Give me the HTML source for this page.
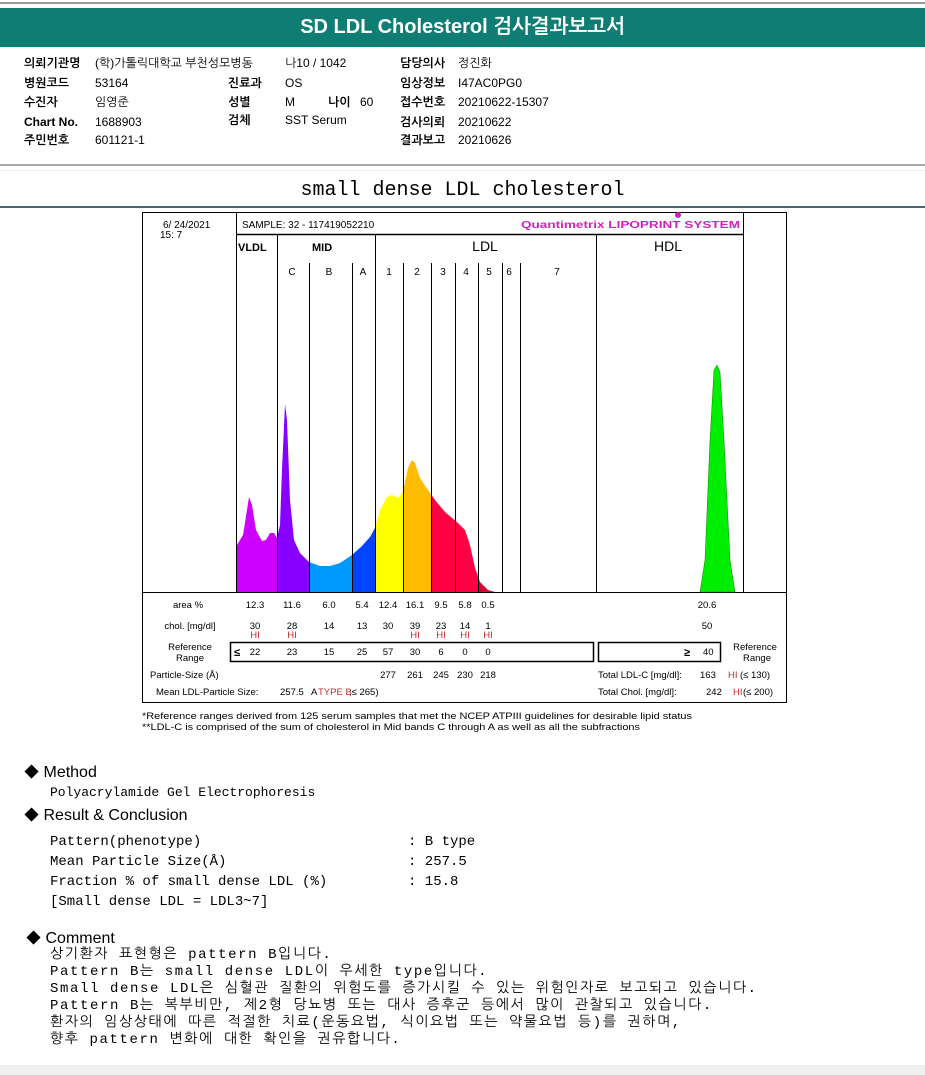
<!DOCTYPE html>
<html><head><meta charset="utf-8"><style>
body{margin:0;width:925px;height:1075px;position:relative;background:#fff;overflow:hidden;font-family:"Liberation Sans","NanumGothic",sans-serif;color:#000}
.a{position:absolute;white-space:nowrap}
.inf{font-size:12px}
.b{font-weight:bold}
.m{font-family:"Liberation Mono","NanumGothic",monospace;font-size:13px}
.h{font-family:"Liberation Sans","NanumGothic",sans-serif;font-size:16px}
.c{font-family:"Liberation Mono","NanumGothic",monospace;font-size:14px;letter-spacing:1.6px;line-height:17px}
</style></head><body>
<div class="a" style="left:0;top:2px;width:925px;height:2px;background:#999"></div>
<div class="a" style="left:0;top:8px;width:925px;height:39px;background:#0f7d73;color:#fff;font-size:20px;font-weight:bold;text-align:center;line-height:39px">SD LDL Cholesterol 검사결과보고서</div>

<div class="a inf b" style="left:24px;top:56px">의뢰기관명</div><div class="a inf" style="left:95px;top:56px">(학)가톨릭대학교 부천성모병동</div>
<div class="a inf" style="left:285px;top:56px">나10 / 1042</div>
<div class="a inf b" style="left:400px;top:56px">담당의사</div><div class="a inf" style="left:458px;top:56px">정진화</div>

<div class="a inf b" style="left:24px;top:76px">병원코드</div><div class="a inf" style="left:95px;top:76px">53164</div>
<div class="a inf b" style="left:228px;top:76px">진료과</div><div class="a inf" style="left:285px;top:76px">OS</div>
<div class="a inf b" style="left:400px;top:76px">임상정보</div><div class="a inf" style="left:458px;top:76px">I47AC0PG0</div>

<div class="a inf b" style="left:24px;top:95px">수진자</div><div class="a inf" style="left:95px;top:95px">임영준</div>
<div class="a inf b" style="left:228px;top:95px">성별</div><div class="a inf" style="left:285px;top:95px">M</div>
<div class="a inf b" style="left:328px;top:95px">나이</div><div class="a inf" style="left:360px;top:95px">60</div>
<div class="a inf b" style="left:400px;top:95px">접수번호</div><div class="a inf" style="left:458px;top:95px">20210622-15307</div>

<div class="a inf b" style="left:24px;top:115px">Chart No.</div><div class="a inf" style="left:95px;top:115px">1688903</div>
<div class="a inf b" style="left:228px;top:113px">검체</div><div class="a inf" style="left:285px;top:113px">SST Serum</div>
<div class="a inf b" style="left:400px;top:115px">검사의뢰</div><div class="a inf" style="left:458px;top:115px">20210622</div>

<div class="a inf b" style="left:24px;top:133px">주민번호</div><div class="a inf" style="left:95px;top:133px">601121-1</div>
<div class="a inf b" style="left:400px;top:133px">결과보고</div><div class="a inf" style="left:458px;top:133px">20210626</div>

<div class="a" style="left:0;top:164px;width:925px;height:2px;background:#aaa"></div>
<div class="a" style="left:0;top:170px;width:925px;height:1px;background:#e4f0f4"></div>
<div class="a" style="left:0;top:178px;width:925px;text-align:center;font-family:'Liberation Mono',monospace;font-size:20px;line-height:26px">small dense LDL cholesterol</div>
<div class="a" style="left:0;top:206px;width:925px;height:2px;background:#4a6470"></div>

<svg class="a" style="left:0;top:0" width="925" height="760" font-family="Liberation Sans, sans-serif">
<defs><clipPath id="cv"><path d="M237,592 L237,545 L243,535 L247,510 L249,497 L252,505 L256,530 L262,541 L266,540 L270,533 L274,533 L277,538 L280,525 L282,470 L285,404 L287,420 L290,500 L294,540 L300,553 L309,562 L320,566 L330,566 L340,563 L352,555 L362,546 L370,537 L375,528 L380,510 L387,497 L392,495 L398,498 L403,492 L408,468 L412,460 L415,463 L420,478 L428,490 L435,500 L445,512 L452,518 L458,523 L465,530 L470,545 L475,568 L480,582 L488,590 L495,592 Z"/></clipPath></defs>
<rect x="142.5" y="212.5" width="644" height="490" fill="none" stroke="#000"/>
<line x1="236.5" y1="212" x2="236.5" y2="592" stroke="#000"/>
<line x1="743.5" y1="212" x2="743.5" y2="592" stroke="#000"/>
<line x1="236" y1="234.5" x2="743" y2="234.5" stroke="#000" stroke-width="1.5"/>
<line x1="142" y1="592.5" x2="786" y2="592.5" stroke="#000"/>
<g clip-path="url(#cv)">
<rect x="236" y="380" width="41" height="213" fill="#cc00ff"/>
<rect x="277" y="380" width="32" height="213" fill="#8800ff"/>
<rect x="309" y="380" width="43" height="213" fill="#0099ff"/>
<rect x="352" y="380" width="23" height="213" fill="#0044ff"/>
<rect x="375" y="380" width="28" height="213" fill="#ffff00"/>
<rect x="403" y="380" width="28" height="213" fill="#ffbb00"/>
<rect x="431" y="380" width="24" height="213" fill="#ff0040"/>
<rect x="455" y="380" width="23" height="213" fill="#ff0044"/>
<rect x="478" y="380" width="24" height="213" fill="#dd0033"/>
</g>
<path d="M700,592 L705,560 L710,440 L714,370 L717,365 L720,372 L724,440 L730,560 L735,592 Z" fill="#00ee00" stroke="#080" stroke-width="0.5"/>
<g stroke="#000" stroke-width="1">
<line x1="277.5" y1="234" x2="277.5" y2="592"/>
<line x1="375.5" y1="234" x2="375.5" y2="592"/>
<line x1="596.5" y1="234" x2="596.5" y2="592"/>
<line x1="309.5" y1="263" x2="309.5" y2="592"/>
<line x1="352.5" y1="263" x2="352.5" y2="592"/>
<line x1="403.5" y1="263" x2="403.5" y2="592"/>
<line x1="431.5" y1="263" x2="431.5" y2="592"/>
<line x1="455.5" y1="263" x2="455.5" y2="592"/>
<line x1="478.5" y1="263" x2="478.5" y2="592"/>
<line x1="502.5" y1="263" x2="502.5" y2="592"/>
<line x1="520.5" y1="263" x2="520.5" y2="592"/>
</g>
<g font-size="10">
<text x="163" y="228">6/ 24/2021</text><text x="160" y="238">15:   7</text>
<text x="242" y="228">SAMPLE:    32 - 117419052210</text>
<text x="521" y="228" fill="#d020c0" font-weight="bold" font-size="10" textLength="219" lengthAdjust="spacingAndGlyphs">Quantimetrix LIPOPRINT  SYSTEM</text>
<circle cx="678" cy="215" r="3" fill="#d020c0"/>
<text x="238" y="251" font-weight="bold" font-size="11">VLDL</text>
<text x="312" y="251" font-weight="bold" font-size="11">MID</text>
<text x="485" y="251" font-size="14" text-anchor="middle">LDL</text>
<text x="668" y="251" font-size="14" text-anchor="middle">HDL</text>
<g text-anchor="middle"><text x="292" y="275">C</text><text x="329" y="275">B</text><text x="363" y="275">A</text><text x="389" y="275">1</text><text x="417" y="275">2</text><text x="443" y="275">3</text><text x="466" y="275">4</text><text x="489" y="275">5</text><text x="509" y="275">6</text><text x="557" y="275">7</text></g>
<g font-size="9.5" text-anchor="middle">
<text x="188" y="608">area %</text>
<text x="255" y="608">12.3</text><text x="292" y="608">11.6</text><text x="329" y="608">6.0</text><text x="362" y="608">5.4</text><text x="388" y="608">12.4</text><text x="415" y="608">16.1</text><text x="441" y="608">9.5</text><text x="465" y="608">5.8</text><text x="488" y="608">0.5</text><text x="707" y="608">20.6</text>
<text x="190" y="629">chol. [mg/dl]</text>
<text x="255" y="629">30</text><text x="292" y="629">28</text><text x="329" y="629">14</text><text x="362" y="629">13</text><text x="388" y="629">30</text><text x="415" y="629">39</text><text x="441" y="629">23</text><text x="465" y="629">14</text><text x="488" y="629">1</text><text x="707" y="629">50</text>
<g fill="#c0302a"><text x="255" y="638">HI</text><text x="292" y="638">HI</text><text x="415" y="638">HI</text><text x="441" y="638">HI</text><text x="465" y="638">HI</text><text x="488" y="638">HI</text></g>
<text x="190" y="650">Reference</text><text x="190" y="661">Range</text>
<text x="755" y="650">Reference</text><text x="757" y="661">Range</text>
<text x="255" y="655">22</text><text x="292" y="655">23</text><text x="329" y="655">15</text><text x="362" y="655">25</text><text x="388" y="655">57</text><text x="415" y="655">30</text><text x="441" y="655">6</text><text x="465" y="655">0</text><text x="488" y="655">0</text>
<text x="388" y="678">277</text><text x="415" y="678">261</text><text x="441" y="678">245</text><text x="465" y="678">230</text><text x="488" y="678">218</text>
</g>
<rect x="230.5" y="642.5" width="363" height="19" fill="none" stroke="#000" stroke-width="1.5"/>
<rect x="598.5" y="642.5" width="122" height="19" fill="none" stroke="#000" stroke-width="1.5"/>
<text x="234" y="656" font-size="11" font-weight="bold">≤</text>
<text x="684" y="656" font-size="11" font-weight="bold">≥</text><text x="703" y="655" font-size="9.5">40</text>
<g font-size="9.5">
<text x="150" y="678">Particle-Size (Å)</text>
<text x="156" y="695">Mean LDL-Particle Size:</text>
<text x="280" y="695">257.5</text><text x="311" y="695">A</text>
<text x="318" y="695" fill="#c0302a">TYPE B</text><text x="349" y="695">;≤ 265)</text>
<text x="598" y="678">Total LDL-C [mg/dl]:</text><text x="700" y="678">163</text><text x="728" y="678" fill="#c0302a">HI</text><text x="740" y="678">(≤ 130)</text>
<text x="598" y="695">Total Chol.  [mg/dl]:</text><text x="706" y="695">242</text><text x="733" y="695" fill="#c0302a">HI</text><text x="743" y="695">(≤ 200)</text>
<text x="142" y="719" textLength="550" lengthAdjust="spacingAndGlyphs">*Reference ranges derived from 125 serum samples that met the NCEP ATPIII guidelines for desirable lipid status</text>
<text x="142" y="730" textLength="498" lengthAdjust="spacingAndGlyphs">**LDL-C is comprised of the sum of cholesterol in Mid bands C through A as well as all the subfractions</text>
</g>
</g>
</svg>

<div class="a h" style="left:24px;top:762px">◆ Method</div>
<div class="a m" style="left:50px;top:785px">Polyacrylamide Gel Electrophoresis</div>
<div class="a h" style="left:24px;top:805px">◆ Result &amp; Conclusion</div>
<div class="a m" style="left:50px;top:832px;font-size:14px;line-height:20px">Pattern(phenotype)<br>Mean Particle Size(Å)<br>Fraction % of small dense LDL (%)<br>[Small dense LDL = LDL3~7]</div>
<div class="a m" style="left:408px;top:832px;font-size:14px;line-height:20px">:  B type<br>:  257.5<br>:  15.8</div>
<div class="a h" style="left:26px;top:928px">◆ Comment</div>
<div class="a c" style="left:50px;top:947px">상기환자 표현형은 pattern B입니다.<br>Pattern B는 small dense LDL이 우세한 type입니다.<br>Small dense LDL은 심혈관 질환의 위험도를 증가시킬 수 있는 위험인자로 보고되고 있습니다.<br>Pattern B는 복부비만, 제2형 당뇨병 또는 대사 증후군 등에서 많이 관찰되고 있습니다.<br>환자의 임상상태에 따른 적절한 치료(운동요법, 식이요법 또는 약물요법 등)를 권하며,<br>향후 pattern 변화에 대한 확인을 권유합니다.</div>
<div class="a" style="left:0;top:1065px;width:925px;height:10px;background:#f0f0f0"></div>
</body></html>
